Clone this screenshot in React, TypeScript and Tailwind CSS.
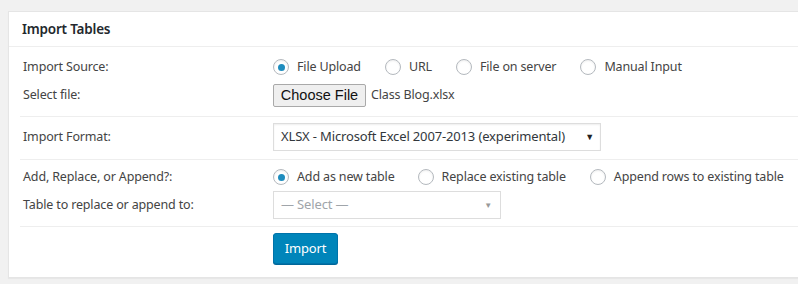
import React from "react";

function Radio({ checked, label }: { checked?: boolean; label: string }) {
  return (
    <label className="flex items-center whitespace-nowrap">
      <span className="w-4 h-4 rounded-full border border-[#b4b9be] bg-white flex items-center justify-center shadow-[inset_0_1px_2px_rgba(0,0,0,0.07)]">
        {checked && <span className="w-[7px] h-[7px] rounded-full bg-[#1e8cbe]" />}
      </span>
      <span className="ml-[8px]">{label}</span>
    </label>
  );
}

export default function App() {
  return (
    <div className="w-[798px] h-[284px] bg-[#f1f1f1] pt-[11px] pl-[8px] overflow-hidden text-[12.5px] tracking-[-0.15px] text-[#444] whitespace-nowrap" style={{ fontFamily: '"Noto Sans", "Open Sans", sans-serif' }}>
      <div className="w-[800px] h-[267px] bg-white border border-[#e5e5e5] shadow-[0_1px_1px_rgba(0,0,0,0.04)]">
        <div className="h-[35px] border-b border-[#eee] flex items-center pl-[13px]">
          <span className="font-semibold text-[13.5px] tracking-[-0.2px] text-[#23282d]">Import Tables</span>
        </div>
        <div className="ml-[11px]">
          <div className="pt-[8px] pb-[9px] border-b border-[#eee]">
            <div className="flex items-center h-[24px]">
              <div className="w-[253px] pl-[3px]">Import Source:</div>
              <div className="flex items-center">
                <Radio checked label="File Upload" />
                <div className="ml-[24px]"><Radio label="URL" /></div>
                <div className="ml-[24px]"><Radio label="File on server" /></div>
                <div className="ml-[24px]"><Radio label="Manual Input" /></div>
              </div>
            </div>
            <div className="flex items-center h-[24px] mt-[4px]">
              <div className="w-[253px] pl-[3px]">Select file:</div>
              <div className="flex items-center">
                <button className="h-[23px] w-[93px] border border-[#a9a9a9] rounded-[2px] bg-[#efefef] text-[#111] text-[14.5px] tracking-normal" style={{ fontFamily: '"Liberation Sans", Arial, sans-serif' }}>Choose File</button>
                <span className="ml-[5px] text-[#444]">Class Blog.xlsx</span>
              </div>
            </div>
          </div>
          <div className="pt-[6px] pb-[8px] border-b border-[#eee]">
            <div className="flex items-center h-[28px]">
              <div className="w-[253px] pl-[3px]">Import Format:</div>
              <div className="w-[328px] h-[28px] border border-[#ddd] flex items-center pl-[7px] pr-[6px] text-[#32373c] text-[13px] shadow-[inset_0_1px_2px_rgba(0,0,0,0.07)]">
                <span className="flex-1">XLSX - Microsoft Excel 2007-2013 (experimental)</span>
                <span className="text-[9px] text-[#222]">▼</span>
              </div>
            </div>
          </div>
          <div className="pt-[5px] pb-[7px] border-b border-[#eee]">
            <div className="flex items-center h-[24px]">
              <div className="w-[253px] pl-[3px]">Add, Replace, or Append?:</div>
              <div className="flex items-center">
                <Radio checked label="Add as new table" />
                <div className="ml-[23px]"><Radio label="Replace existing table" /></div>
                <div className="ml-[24px]"><Radio label="Append rows to existing table" /></div>
              </div>
            </div>
            <div className="flex items-center h-[28px] mt-[2px]">
              <div className="w-[253px] pl-[3px]">Table to replace or append to:</div>
              <div className="w-[228px] h-[28px] border border-[#ddd] flex items-center pl-[7px] pr-[8px] text-[#a0a5aa] text-[13px]">
                <span className="flex-1">— Select —</span>
                <span className="text-[8px] text-[#999]">▼</span>
              </div>
            </div>
          </div>
          <div className="pt-[6px] pl-[253px]">
            <button className="h-[31px] w-[65px] rounded-[3px] bg-[#0085ba] border border-[#0073aa] text-white text-[13px] shadow-[0_1px_0_#006799]">Import</button>
          </div>
        </div>
      </div>
    </div>
  );
}
